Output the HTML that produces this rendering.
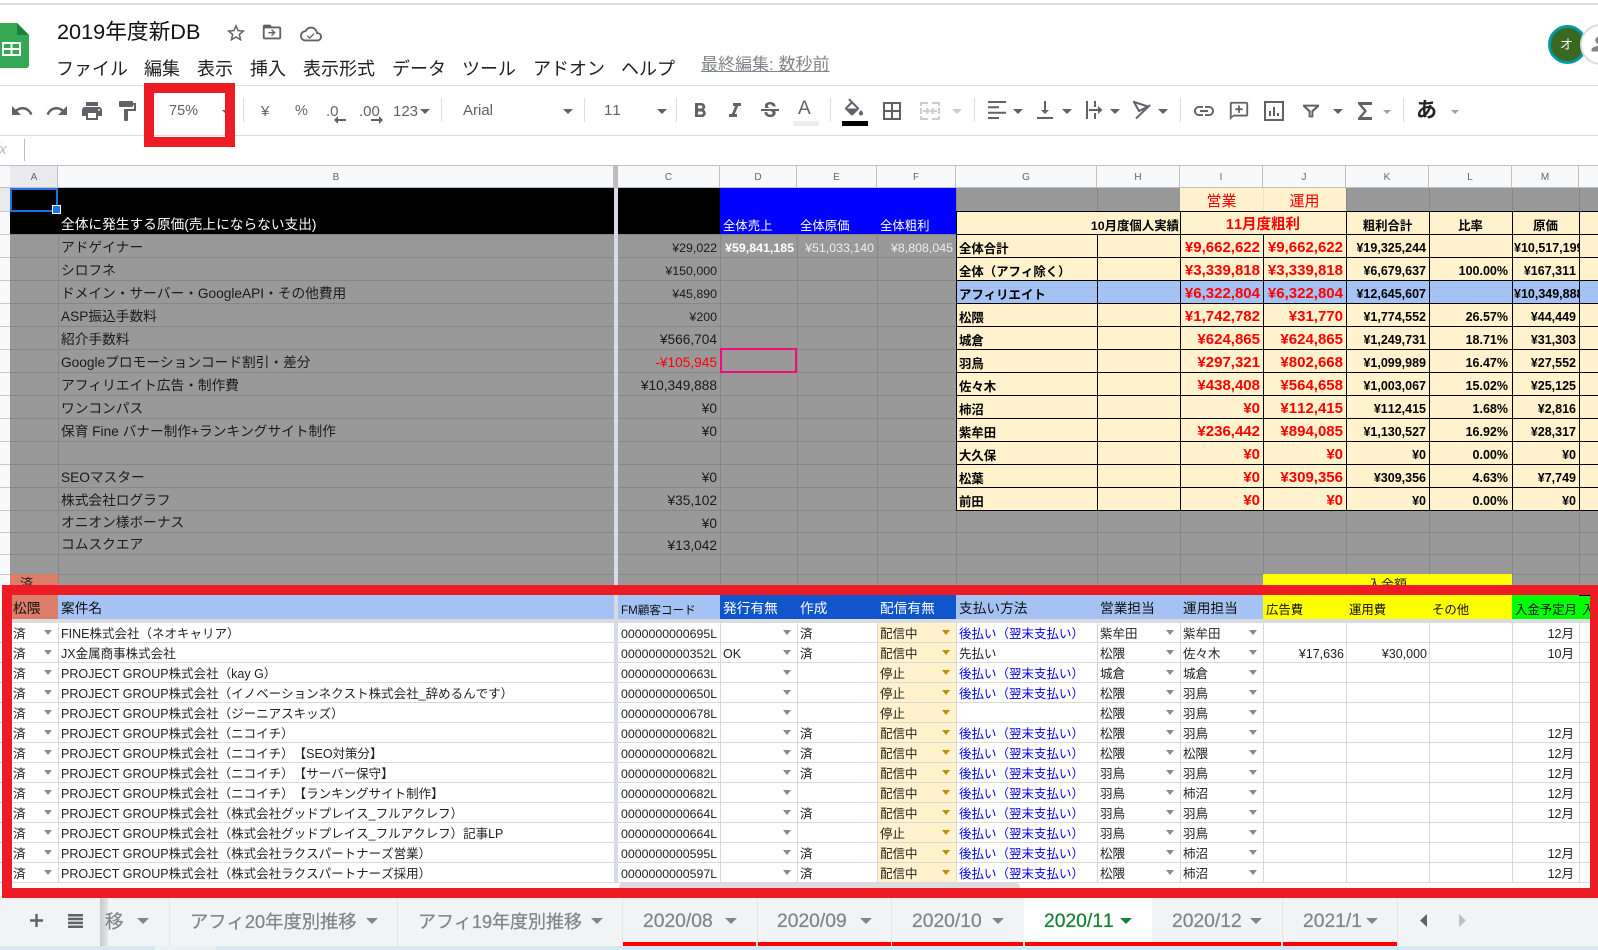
<!DOCTYPE html>
<html lang="ja"><head><meta charset="utf-8"><title>2019年度新DB</title>
<style>
*{box-sizing:border-box}
html,body{margin:0;padding:0;width:1598px;height:950px;overflow:hidden;background:#fff}
body{position:relative;font-family:"Liberation Sans","Noto Sans CJK JP",sans-serif;color:#000;text-spacing-trim:space-all;font-kerning:none}
.a{position:absolute}
svg{position:absolute;fill:#5f6368}
.t{position:absolute;white-space:nowrap;line-height:1}
.m{font-size:18px;top:59.5px;color:#202124}
.tb{color:#5f6368;font-size:15px;top:104px}
.sep{position:absolute;top:98px;height:24px;width:1px;background:#dadce0}
.ar{position:absolute;width:0;height:0;border-left:5px solid transparent;border-right:5px solid transparent;border-top:5px solid #5f6368}
.ch{position:absolute;top:165px;height:23px;line-height:23px;background:#f8f9fa;border-top:1px solid #c0c0c0;border-right:1px solid #c0c0c0;border-bottom:1px solid #c0c0c0;font-size:10px;text-align:center;color:#666}
.v{position:absolute;width:1px}
.r{position:absolute;left:0;width:1598px;height:23px}
.r>*{position:absolute;top:0;height:100%;overflow:hidden;white-space:nowrap;font-style:normal;font-size:13.7px;line-height:27px;padding:0 3px;text-decoration:none;color:#1a1a1a}
.A{left:10px;width:48px}.B{left:58px;width:556px}.C{left:618px;width:102px}.D{left:720px;width:77px}.E{left:797px;width:80px}.F{left:877px;width:79px}
.G{left:956px;width:141px}.H{left:1097px;width:83px}.I{left:1180px;width:83px}.J{left:1263px;width:83px}.K{left:1346px;width:83px}.L{left:1429px;width:83px}.M{left:1512px;width:67px}.N{left:1579px;width:19px}
.n{text-align:right}
.s>*{font-size:12.5px;font-weight:bold;line-height:29px;color:#000;padding:0 3px 0 2px}
.s>.G{font-size:12.4px;padding-left:3px;line-height:30px}
.s>.I,.s>.J{font-size:15px;color:#f00;line-height:27px;padding-right:3px}
.s>.L{padding-right:4px}.s>.M{padding-right:3px}
.q{height:20px}
.q>*{font-size:12.5px;line-height:23px;color:#222;padding:0 2px 0 3px}
.q>.C{padding-left:3px;font-size:12.35px}
.q>.F{background:#fff2cc}
.q>.G{color:#0000ff}
.q>.G.k{color:#222}
.q>.A::after,.q>.D::after,.q>.H::after,.q>.I::after,.q>.F::after{content:"";position:absolute;right:6px;top:7px;width:0;height:0;border-left:4px solid transparent;border-right:4px solid transparent;border-top:5px solid #8a8a8a}
.q>.F::after{border-top-color:#bf9000}
.q>.M{padding-right:5px}
.h{height:24px}
.h>*{font-size:13.7px;line-height:28px;color:#111}
.tl{position:absolute;top:910px;font-size:19.3px;line-height:24px;color:#80868b;white-space:nowrap;-webkit-text-stroke:.25px #80868b}
.rl{position:absolute;top:942px;height:4px;background:#f00}
.ta{position:absolute;top:918px;width:0;height:0;border-left:6px solid transparent;border-right:6px solid transparent;border-top:6px solid #80868b}
.d{position:absolute;top:898px;width:1px;height:48px;background:#e3e5e7}
.g3{top:234px;height:350px;background:#878787}
.g4{top:188px;height:396px;background:#878787}
.bk{background:#000}
.li{top:623px;height:260px;background:#d9d9d9}
</style></head><body>

<div class="a" style="left:0;top:3px;width:1598px;height:2px;background:#dadce0"></div>

<svg style="left:0;top:23px" width="29" height="45" viewBox="0 0 29 45"><path fill="#34a853" d="M0 0H17L29 12V42Q29 45 26 45H0Z"/><path fill="#188038" d="M17 0L29 12H19Q17 12 17 10Z"/><path fill="#fff" d="M2 19H21V33H2ZM4 21V25H10.5V21ZM12.5 21V25H19V21ZM4 27V31H10.5V27ZM12.5 27V31H19V27Z"/></svg>

<div class="t" style="left:57px;top:20px;font-size:21.7px;line-height:24px;color:#111">2019年度新DB</div>
<svg style="left:225px;top:22px" width="22" height="22" viewBox="0 0 24 24"><path d="M22 9.24l-7.19-.62L12 2 9.19 8.63 2 9.24l5.46 4.73L5.82 21 12 17.27 18.18 21l-1.63-7.03L22 9.24zM12 15.4l-3.76 2.27 1-4.28-3.32-2.88 4.38-.38L12 6.1l1.71 4.04 4.38.38-3.32 2.88 1 4.28L12 15.4z"/></svg>
<svg style="left:261px;top:21px" width="22" height="22" viewBox="0 0 24 24"><path d="M20 6h-8l-2-2H4c-1.1 0-2 .9-2 2v12c0 1.1.9 2 2 2h16c1.1 0 2-.9 2-2V8c0-1.1-.9-2-2-2zm0 12H4V8h16v10z"/><path d="M12 9l-1 1 2 2H8v1.5h5l-2 2 1 1 4-4z"/></svg>
<svg style="left:300px;top:23px" width="22" height="22" viewBox="0 0 24 24"><path d="M19.35 10.04C18.67 6.59 15.64 4 12 4 9.11 4 6.6 5.64 5.35 8.04 2.34 8.36 0 10.91 0 14c0 3.31 2.69 6 6 6h13c2.76 0 5-2.24 5-5 0-2.64-2.05-4.78-4.65-4.96zM19 18H6c-2.21 0-4-1.79-4-4s1.79-4 4-4h.71C7.37 7.69 9.48 6 12 6c3.04 0 5.5 2.46 5.5 5.5v.5H19c1.66 0 3 1.34 3 3s-1.34 3-3 3z"/><path d="M10.5 15.5l-2-2-1 1 3 3 5.5-5.5-1-1z"/></svg>

<div class="t m" style="left:56px">ファイル</div>
<div class="t m" style="left:144px">編集</div>
<div class="t m" style="left:197px">表示</div>
<div class="t m" style="left:250px">挿入</div>
<div class="t m" style="left:303px">表示形式</div>
<div class="t m" style="left:392px">データ</div>
<div class="t m" style="left:462px">ツール</div>
<div class="t m" style="left:533px">アドオン</div>
<div class="t m" style="left:621px">ヘルプ</div>
<div class="t" style="left:701px;top:56px;font-size:17px;color:#80868b;text-decoration:underline">最終編集: 数秒前</div>

<div class="a" style="left:1548px;top:25px;width:39px;height:39px;border-radius:50%;background:#38691e;border:3px solid #0097a7;color:#fff;font-size:13px;line-height:33px;text-align:center;padding-right:2px">オ</div>
<div class="a" style="left:1580px;top:24px;width:41px;height:41px;border-radius:50%;background:#fff;border:2px solid #dadce0"></div>
<svg style="left:1590px;top:35px" width="18" height="18" viewBox="0 0 24 24"><path fill="#80868b" d="M12 12a5 5 0 1 0 0-10 5 5 0 0 0 0 10zm0 2.5c-3.3 0-10 1.7-10 5V22h20v-2.5c0-3.3-6.700-5-10-5z"/></svg>

<div class="a" style="left:0;top:85px;width:1598px;height:1px;background:#dadce0"></div>
<div class="a" style="left:0;top:135px;width:1598px;height:1px;background:#dadce0"></div>
<svg style="left:10px;top:99px" width="24" height="24" viewBox="0 0 24 24"><path d="M12.500 8c-2.650 0-5.050.99-6.900 2.600L2 7v9h9l-3.620-3.620c1.390-1.160 3.160-1.880 5.120-1.880 3.540 0 6.550 2.310 7.600 5.500l2.370-.78C21.080 11.030 17.150 8 12.500 8z"/></svg>
<svg style="left:45px;top:99px" width="24" height="24" viewBox="0 0 24 24"><path d="M18.400 10.600C16.550 8.990 14.150 8 11.500 8c-4.650 0-8.580 3.030-9.960 7.220L3.900 16c1.050-3.190 4.050-5.500 7.600-5.500 1.950 0 3.730.72 5.120 1.880L13 16h9V7l-3.600 3.600z"/></svg>
<svg style="left:80px;top:99px" width="24" height="24" viewBox="0 0 24 24"><path d="M19 8H5c-1.660 0-3 1.340-3 3v6h4v4h12v-4h4v-6c0-1.660-1.340-3-3-3zm-3 11H8v-5h8v5zm3-7c-.55 0-1-.45-1-1s.45-1 1-1 1 .45 1 1-.45 1-1 1zm-1-9H6v4h12V3z"/></svg>
<svg style="left:115px;top:99px" width="24" height="24" viewBox="0 0 24 24"><path d="M18 4V3c0-.55-.45-1-1-1H5c-.55 0-1 .45-1 1v4c0 .55.45 1 1 1h12c.55 0 1-.45 1-1V6h1v4H9v11c0 .55.45 1 1 1h2c.55 0 1-.45 1-1v-9h8V4h-3z"/></svg>
<div class="t tb" style="left:169px;font-size:14.500px">75%</div>
<div class="ar" style="left:222px;top:110px;border-left-width:4px;border-right-width:4px;border-top-width:4px"></div>
<div class="sep" style="left:243px"></div>
<div class="t tb" style="left:261px">¥</div>
<div class="t tb" style="left:295px;font-size:14.500px">%</div>
<div class="t tb" style="left:326px">.0</div>
<svg style="left:334px;top:116px" width="12" height="8" viewBox="0 0 12 8"><path d="M4 0L0 4l4 4V5h8V3H4z"/></svg>
<div class="t tb" style="left:359px">.00</div>
<svg style="left:371px;top:116px" width="12" height="8" viewBox="0 0 12 8"><path d="M8 0l4 4-4 4V5H0V3h8z"/></svg>
<div class="t tb" style="left:393px">123</div>
<div class="ar" style="left:420px;top:109px"></div>
<div class="sep" style="left:441px"></div>
<div class="t tb" style="left:463px;top:103px">Arial</div>
<div class="ar" style="left:563px;top:109px"></div>
<div class="sep" style="left:584px"></div>
<div class="t tb" style="left:604px;top:103px">11</div>
<div class="ar" style="left:657px;top:109px"></div>
<div class="sep" style="left:676px"></div>
<svg style="left:688px;top:99px" width="24" height="24" viewBox="0 0 24 24"><path d="M15.600 10.790c.97-.67 1.650-1.770 1.650-2.790 0-2.260-1.750-4-4-4H7v14h7.040c2.090 0 3.710-1.700 3.710-3.790 0-1.520-.86-2.820-2.150-3.420zM10 6.500h3c.83 0 1.500.67 1.500 1.500s-.67 1.500-1.500 1.500h-3v-3zm3.500 9H10v-3h3.500c.83 0 1.500.67 1.500 1.500s-.67 1.500-1.500 1.500z"/></svg>
<svg style="left:723px;top:99px" width="24" height="24" viewBox="0 0 24 24"><path d="M10 4v3h2.210l-3.420 8H6v3h8v-3h-2.210l3.420-8H18V4z"/></svg>
<svg style="left:758px;top:99px" width="24" height="24" viewBox="0 0 24 24"><path d="M6.850 7.080C6.850 4.370 9.450 3 12.240 3c1.640 0 3 .49 3.900 1.280.77.65 1.460 1.730 1.460 3.240h-3.010c0-.31-.05-.59-.15-.85-.29-.86-1.200-1.280-2.250-1.280-1.860 0-2.340 1.020-2.340 1.700 0 .48.25.88.74 1.210.38.25.77.48 1.410.7H7.390c-.21-.34-.54-.89-.54-1.920zM21 12v-2H3v2h9.620c1.150.45 1.960.75 1.960 1.970 0 1-.81 1.670-2.280 1.670-1.540 0-2.930-.54-2.930-2.510H6.400c0 .55.08 1.130.24 1.580.81 2.290 3.290 3.300 5.670 3.300 2.270 0 5.300-.89 5.300-4.050 0-.3-.01-1.160-.48-1.940H21V12z"/></svg>
<div class="t" style="left:798px;top:99px;font-size:19px;color:#5f6368">A</div>
<div class="a" style="left:793px;top:121px;width:26px;height:5px;background:#eee"></div>
<div class="sep" style="left:830px"></div>
<svg style="left:842px;top:98px" width="22" height="20" viewBox="0 0 22 19"><path d="M16.560 8.940L7.620 0 6.210 1.410l2.380 2.380-5.150 5.150c-.59.59-.59 1.540 0 2.120l5.500 5.500c.29.29.68.44 1.060.44s.77-.15 1.060-.44l5.500-5.500c.59-.58.59-1.530 0-2.120zM5.210 10L10 5.210 14.790 10H5.210zM19 11.500s-2 2.170-2 3.500c0 1.100.9 2 2 2s2-.9 2-2c0-1.330-2-3.500-2-3.500z"/></svg>
<div class="a" style="left:842px;top:121px;width:26px;height:5px;background:#000"></div>
<svg style="left:883px;top:102px" width="18" height="18" viewBox="0 0 18 18"><path d="M0 0H18V18H0ZM2 2V8H8V2ZM10 2V8H16V2ZM2 10V16H8V10ZM10 10V16H16V10Z"/></svg>
<svg style="left:920px;top:102px" width="20" height="18" viewBox="0 0 20 18"><path fill="#ccc" d="M0 0H8V2H2V4H0ZM12 0H20V4H18V2H12ZM0 14H2V16H8V18H0ZM18 14H20V18H12V16H18ZM0 6H2V12H0ZM18 6H20V12H18ZM3 8H7L5.500 6H7.500L10 9 7.500 12H5.500L7 10H3ZM17 8H13L14.500 6H12.500L10 9 12.500 12H14.500L13 10H17Z"/></svg>
<div class="ar" style="left:952px;top:109px;border-top-color:#ccc"></div>
<div class="sep" style="left:974px"></div>
<svg style="left:988px;top:101px" width="18" height="18" viewBox="0 0 18 18"><path d="M0 0H18V2H0ZM0 5.300H11V7.300H0ZM0 10.700H18V12.700H0ZM0 16H11V18H0Z"/></svg>
<div class="ar" style="left:1013px;top:109px"></div>
<svg style="left:1037px;top:101px" width="16" height="18" viewBox="0 0 16 18"><path d="M7 0H9V9H12L8 13 4 9H7ZM0 16H16V18H0Z"/></svg>
<div class="ar" style="left:1062px;top:109px"></div>
<svg style="left:1086px;top:101px" width="17" height="18" viewBox="0 0 17 18"><path d="M0 0H2V18H0ZM8 0H10V6H8ZM8 12H10V18H8ZM3 8H12V5L16.500 9 12 13V10H3Z"/></svg>
<div class="ar" style="left:1110px;top:109px"></div>
<svg style="left:1133px;top:100px" width="20" height="20" viewBox="0 0 20 20"><path fill="none" stroke="#5f6368" stroke-width="2" d="M1 2L15 6.500 6 11ZM3 18.500L17 5"/></svg>
<div class="ar" style="left:1158px;top:109px"></div>
<div class="sep" style="left:1180px"></div>
<svg style="left:1192px;top:99px" width="24" height="24" viewBox="0 0 24 24"><path d="M3.900 12c0-1.710 1.390-3.100 3.100-3.100h4V7H7c-2.760 0-5 2.240-5 5s2.240 5 5 5h4v-1.900H7c-1.710 0-3.100-1.390-3.100-3.100zM8 13h8v-2H8v2zm9-6h-4v1.900h4c1.710 0 3.100 1.390 3.100 3.100s-1.390 3.100-3.100 3.100h-4V17h4c2.760 0 5-2.240 5-5s-2.240-5-5-5z"/></svg>
<svg style="left:1228px;top:100px" width="22" height="22" viewBox="0 0 24 24"><path d="M20 2H4c-1.100 0-2 .9-2 2v18l4-4h14c1.100 0 2-.9 2-2V4c0-1.100-.9-2-2-2zm0 14H6l-2 2V4h16v12z"/><path d="M11 6h2v3h3v2h-3v3h-2v-3H8V9h3z"/></svg>
<svg style="left:1264px;top:101px" width="20" height="20" viewBox="0 0 20 20"><path d="M0 0H20V20H0ZM2 2V18H18V2ZM5 10H7V15H5ZM9 6H11V15H9ZM13 12H15V15H13Z"/></svg>
<svg style="left:1303px;top:103px" width="16" height="16" viewBox="0 0 20 16"><path d="M0 0H20V2.500L13 9V16H7V9L0 2.500ZM4 2.500L9.500 7.500V14H10.500V7.500L16 2.500Z"/></svg>
<div class="ar" style="left:1333px;top:109px"></div>
<svg style="left:1358px;top:102px" width="14" height="18" viewBox="0 0 14 18"><path d="M0 0H14V3H4L9 9 4 15H14V18H0V16L6 9 0 2Z"/></svg>
<div class="ar" style="left:1383px;top:110px;border-left-width:4px;border-right-width:4px;border-top:4px solid #9aa0a6"></div>
<div class="sep" style="left:1403px"></div>
<div class="t" style="left:1416px;top:100px;font-size:21px;font-weight:bold;color:#222">あ</div>
<div class="ar" style="left:1451px;top:110px;border-left-width:4px;border-right-width:4px;border-top:4px solid #9aa0a6"></div>

<div class="t" style="left:-5px;top:142px;font-size:15px;color:#bbb;font-style:italic">fx</div>
<div class="a" style="left:24px;top:139px;width:1px;height:22px;background:#bdbdbd"></div>

<div class="a" style="left:0;top:165px;width:1598px;height:23px;background:#f8f9fa;border-top:1px solid #c0c0c0;border-bottom:1px solid #c0c0c0"></div>
<div class="ch" style="left:10px;width:48px;background:#e8eaed;padding-left:1px">A</div>
<div class="ch" style="left:58px;width:556px;padding-left:1px">B</div>
<div class="a" style="left:614px;top:165px;width:4px;height:23px;background:#bdbdbd"></div>
<div class="ch" style="left:618px;width:102px">C</div>
<div class="ch" style="left:720px;width:77px">D</div>
<div class="ch" style="left:797px;width:80px">E</div>
<div class="ch" style="left:877px;width:79px">F</div>
<div class="ch" style="left:956px;width:141px">G</div>
<div class="ch" style="left:1097px;width:83px">H</div>
<div class="ch" style="left:1180px;width:83px">I</div>
<div class="ch" style="left:1263px;width:83px">J</div>
<div class="ch" style="left:1346px;width:83px">K</div>
<div class="ch" style="left:1429px;width:83px">L</div>
<div class="ch" style="left:1512px;width:67px">M</div>
<div class="ch" style="left:1579px;width:19px;border-right:0"></div>

<div class="a" style="left:0;top:188px;width:10px;height:710px;background:#f8f9fa"></div>
<div class="a" style="left:0;top:188px;width:10px;height:23px;background:#e8eaed"></div>
<div class="a" style="left:0;top:211px;width:10px;height:300px;background:repeating-linear-gradient(to bottom,#c8c8c8 0 1px,transparent 1px 23px)"></div>
<div class="a" style="left:0;top:532px;width:10px;height:1px;background:#c8c8c8"></div>
<div class="a" style="left:0;top:554px;width:10px;height:1px;background:#c8c8c8"></div>
<div class="a" style="left:0;top:574px;width:10px;height:1px;background:#c8c8c8"></div>
<div class="a" style="left:0;top:642px;width:10px;height:241px;background:repeating-linear-gradient(to bottom,#c8c8c8 0 1px,transparent 1px 20px)"></div>

<div class="a" style="left:10px;top:188px;width:1588px;height:400px;background:#999"></div>
<div class="a" style="left:10px;top:234px;width:1588px;height:277px;background:repeating-linear-gradient(to bottom,#878787 0 1px,transparent 1px 23px)"></div>
<div class="a" style="left:10px;top:532px;width:1588px;height:1px;background:#878787"></div>
<div class="a" style="left:10px;top:554px;width:1588px;height:1px;background:#878787"></div>
<div class="a" style="left:10px;top:574px;width:1588px;height:1px;background:#878787"></div>
<div class="a" style="left:10px;top:211px;width:1588px;height:1px;background:#878787"></div>
<div class="v g3" style="left:58px"></div>
<div class="v g3" style="left:720px"></div>
<div class="v g3" style="left:797px"></div>
<div class="v g3" style="left:877px"></div>
<div class="v g4" style="left:956px"></div>
<div class="v g4" style="left:1097px"></div>
<div class="v g4" style="left:1180px"></div>
<div class="v g4" style="left:1263px"></div>
<div class="v g4" style="left:1346px"></div>
<div class="v g4" style="left:1429px"></div>
<div class="v g4" style="left:1512px"></div>
<div class="v g4" style="left:1579px"></div>

<div class="a" style="left:10px;top:188px;width:710px;height:46px;background:#000"></div>
<div class="a" style="left:720px;top:188px;width:236px;height:46px;background:#00f"></div>
<div class="t" style="left:61px;top:214px;font-size:13.7px;line-height:22px;color:#fff">全体に発生する原価(売上にならない支出)</div>
<div class="t" style="left:723px;top:216px;font-size:12.400px;line-height:20px;color:#fff">全体売上</div>
<div class="t" style="left:800px;top:216px;font-size:12.400px;line-height:20px;color:#fff">全体原価</div>
<div class="t" style="left:880px;top:216px;font-size:12.400px;line-height:20px;color:#fff">全体粗利</div>

<div class="a" style="left:1180px;top:188px;width:166px;height:23px;background:#fff2cc"></div>
<div class="a" style="left:1263px;top:188px;width:1px;height:23px;background:#f0e4c0"></div>
<div class="t" style="left:1180px;top:188px;width:83px;text-align:center;font-size:15px;line-height:28px;color:#f00">営業</div>
<div class="t" style="left:1263px;top:188px;width:83px;text-align:center;font-size:15px;line-height:28px;color:#f00">運用</div>
<div class="a" style="left:956px;top:211px;width:642px;height:300px;background:#fff2cc"></div>
<div class="a" style="left:956px;top:280px;width:642px;height:23px;background:#a4c2f4"></div>
<div class="a" style="left:956px;top:211px;width:642px;height:300px;background:repeating-linear-gradient(to bottom,#000 0 1px,transparent 1px 23px)"></div>
<div class="v bk" style="left:956px;top:211px;height:300px"></div>
<div class="v bk" style="left:1097px;top:234px;height:277px"></div>
<div class="v bk" style="left:1180px;top:211px;height:300px"></div>
<div class="v bk" style="left:1263px;top:234px;height:277px"></div>
<div class="v bk" style="left:1346px;top:211px;height:300px"></div>
<div class="v bk" style="left:1429px;top:211px;height:300px"></div>
<div class="v bk" style="left:1512px;top:211px;height:300px"></div>
<div class="v bk" style="left:1579px;top:211px;height:300px"></div>
<div class="t" style="left:1059px;top:212px;width:120px;height:22px;overflow:hidden;direction:rtl;font-size:12.400px;line-height:29px;font-weight:bold;text-align:right"><span style="direction:ltr;unicode-bidi:bidi-override">10月度個人実績</span></div>
<div class="t" style="left:1180px;top:211px;width:166px;text-align:center;font-size:14.500px;line-height:28px;font-weight:bold;color:#f00">11月度粗利</div>
<div class="t" style="left:1346px;top:211px;width:83px;text-align:center;font-size:12.400px;line-height:30px;font-weight:bold">粗利合計</div>
<div class="t" style="left:1429px;top:211px;width:83px;text-align:center;font-size:12.400px;line-height:30px;font-weight:bold">比率</div>
<div class="t" style="left:1512px;top:211px;width:67px;text-align:center;font-size:12.400px;line-height:30px;font-weight:bold">原価</div>

<div class="r" style="top:234px"><a class="B">アドゲイナー</a><a class="C n" style="line-height:29px;font-size:12.400px">¥29,022</a><a class="D n" style="color:#fff;font-weight:bold;font-size:12.400px;line-height:29px">¥59,841,185</a><a class="E n" style="color:#eee;font-size:12.400px;line-height:29px">¥51,033,140</a><a class="F n" style="color:#eee;font-size:12.400px;line-height:29px">¥8,808,045</a></div>
<div class="r" style="top:257px"><a class="B">シロフネ</a><a class="C n" style="line-height:29px;font-size:12.400px">¥150,000</a></div>
<div class="r" style="top:280px"><a class="B">ドメイン・サーバー・GoogleAPI・その他費用</a><a class="C n" style="line-height:29px;font-size:12.400px">¥45,890</a></div>
<div class="r" style="top:303px"><a class="B">ASP振込手数料</a><a class="C n" style="line-height:29px;font-size:12.400px">¥200</a></div>
<div class="r" style="top:326px"><a class="B">紹介手数料</a><a class="C n" style="line-height:27px">¥566,704</a></div>
<div class="r" style="top:349px"><a class="B">Googleプロモーションコード割引・差分</a><a class="C n" style="line-height:27px;color:#f00">-¥105,945</a></div>
<div class="r" style="top:372px"><a class="B">アフィリエイト広告・制作費</a><a class="C n" style="line-height:27px">¥10,349,888</a></div>
<div class="r" style="top:395px"><a class="B">ワンコンパス</a><a class="C n" style="line-height:27px">¥0</a></div>
<div class="r" style="top:418px"><a class="B">保育 Fine バナー制作+ランキングサイト制作</a><a class="C n" style="line-height:27px">¥0</a></div>
<div class="r" style="top:464px"><a class="B">SEOマスター</a><a class="C n" style="line-height:27px">¥0</a></div>
<div class="r" style="top:487px"><a class="B">株式会社ログラフ</a><a class="C n" style="line-height:27px">¥35,102</a></div>
<div class="r" style="top:510px;height:22px"><a class="B" style="line-height:26px">オニオン様ボーナス</a><a class="C n" style="line-height:27px">¥0</a></div>
<div class="r" style="top:532px;height:22px"><a class="B" style="line-height:26px">コムスクエア</a><a class="C n" style="line-height:27px">¥13,042</a></div>

<div class="a" style="left:720px;top:348px;width:77px;height:25px;border:2px solid #f50a80"></div>

<div class="a" style="left:10px;top:188px;width:48px;height:24px;border:2px solid #1a73e8"></div>
<div class="a" style="left:52px;top:205px;width:9px;height:9px;background:#1a73e8;border:1px solid #fff"></div>

<div class="r s" style="top:234px"><a class="G">全体合計</a><a class="I n">¥9,662,622</a><a class="J n">¥9,662,622</a><a class="K n">¥19,325,244</a><a class="M">¥10,517,199</a></div>
<div class="r s" style="top:257px"><a class="G">全体（アフィ除く）</a><a class="I n">¥3,339,818</a><a class="J n">¥3,339,818</a><a class="K n">¥6,679,637</a><a class="L n">100.00%</a><a class="M n">¥167,311</a></div>
<div class="r s" style="top:280px"><a class="G">アフィリエイト</a><a class="I n">¥6,322,804</a><a class="J n">¥6,322,804</a><a class="K n">¥12,645,607</a><a class="M">¥10,349,888</a></div>
<div class="r s" style="top:303px"><a class="G">松隈</a><a class="I n">¥1,742,782</a><a class="J n">¥31,770</a><a class="K n">¥1,774,552</a><a class="L n">26.57%</a><a class="M n">¥44,449</a></div>
<div class="r s" style="top:326px"><a class="G">城倉</a><a class="I n">¥624,865</a><a class="J n">¥624,865</a><a class="K n">¥1,249,731</a><a class="L n">18.71%</a><a class="M n">¥31,303</a></div>
<div class="r s" style="top:349px"><a class="G">羽鳥</a><a class="I n">¥297,321</a><a class="J n">¥802,668</a><a class="K n">¥1,099,989</a><a class="L n">16.47%</a><a class="M n">¥27,552</a></div>
<div class="r s" style="top:372px"><a class="G">佐々木</a><a class="I n">¥438,408</a><a class="J n">¥564,658</a><a class="K n">¥1,003,067</a><a class="L n">15.02%</a><a class="M n">¥25,125</a></div>
<div class="r s" style="top:395px"><a class="G">柿沼</a><a class="I n">¥0</a><a class="J n">¥112,415</a><a class="K n">¥112,415</a><a class="L n">1.68%</a><a class="M n">¥2,816</a></div>
<div class="r s" style="top:418px"><a class="G">紫牟田</a><a class="I n">¥236,442</a><a class="J n">¥894,085</a><a class="K n">¥1,130,527</a><a class="L n">16.92%</a><a class="M n">¥28,317</a></div>
<div class="r s" style="top:441px"><a class="G">大久保</a><a class="I n">¥0</a><a class="J n">¥0</a><a class="K n">¥0</a><a class="L n">0.00%</a><a class="M n">¥0</a></div>
<div class="r s" style="top:464px"><a class="G">松葉</a><a class="I n">¥0</a><a class="J n">¥309,356</a><a class="K n">¥309,356</a><a class="L n">4.63%</a><a class="M n">¥7,749</a></div>
<div class="r s" style="top:487px"><a class="G">前田</a><a class="I n">¥0</a><a class="J n">¥0</a><a class="K n">¥0</a><a class="L n">0.00%</a><a class="M n">¥0</a></div>

<div class="a" style="left:10px;top:574px;width:48px;height:14px;background:#dd7e6b"></div>
<div class="t" style="left:20px;top:576px;font-size:13px;line-height:16px;height:12px;overflow:hidden;color:#222">済</div>
<div class="a" style="left:1263px;top:574px;width:249px;height:14px;background:#ff0"></div>
<div class="t" style="left:1263px;top:578px;width:249px;text-align:center;font-size:13px;height:8px;overflow:hidden;color:#222">入金額</div>

<div class="a" style="left:614px;top:188px;width:4px;height:400px;background:#d8dbe3"></div>

<div class="a" style="left:0;top:595px;width:1598px;height:24px;background:#fff"></div>
<div class="a" style="left:10px;top:595px;width:48px;height:24px;background:#dd7e6b"></div>
<div class="a" style="left:58px;top:595px;width:662px;height:24px;background:#a4c2f4"></div>
<div class="a" style="left:720px;top:595px;width:236px;height:24px;background:#1155cc"></div>
<div class="a" style="left:956px;top:595px;width:307px;height:24px;background:#a4c2f4"></div>
<div class="a" style="left:1263px;top:595px;width:249px;height:24px;background:#ff0"></div>
<div class="a" style="left:1512px;top:595px;width:86px;height:24px;background:#0f0"></div>
<div class="a" style="left:1579px;top:595px;width:19px;height:1px;background:#000"></div>
<div class="a" style="left:614px;top:595px;width:4px;height:24px;background:#d8dbe3"></div>
<div class="a" style="left:10px;top:619px;width:1588px;height:4px;background:#dadce0"></div>
<div class="r h" style="top:595px"><a class="A" style="padding-left:3px">松隈</a><a class="B">案件名</a><a class="C" style="font-size:11.600px;line-height:31px">FM顧客コード</a><a class="D" style="color:#fff">発行有無</a><a class="E" style="color:#fff">作成</a><a class="F" style="color:#fff">配信有無</a><a class="G">支払い方法</a><a class="H">営業担当</a><a class="I">運用担当</a><a class="J" style="font-size:12.400px;line-height:31px">広告費</a><a class="K" style="font-size:12.400px;line-height:31px">運用費</a><a class="L" style="font-size:12.400px;line-height:31px">その他</a><a class="M" style="font-size:12.400px;line-height:31px">入金予定月</a><a class="N" style="font-size:12.400px;line-height:31px">入金</a></div>

<div class="a" style="left:10px;top:623px;width:1588px;height:275px;background:#fff"></div>
<div class="a" style="left:877px;top:623px;width:79px;height:260px;background:#fff2cc"></div>
<div class="a" style="left:614px;top:623px;width:4px;height:260px;background:#d8dbe3"></div>

<div class="r q" style="top:623px"><a class="A">済</a><a class="B">FINE株式会社（ネオキャリア）</a><a class="C">0000000000695L</a><a class="D"></a><a class="E">済</a><a class="F">配信中</a><a class="G">後払い（翌末支払い）</a><a class="H">紫牟田</a><a class="I">紫牟田</a><a class="M n">12月</a></div>
<div class="r q" style="top:643px"><a class="A">済</a><a class="B">JX金属商事株式会社</a><a class="C">0000000000352L</a><a class="D">OK</a><a class="E">済</a><a class="F">配信中</a><a class="G k">先払い</a><a class="H">松隈</a><a class="I">佐々木</a><a class="J n">¥17,636</a><a class="K n">¥30,000</a><a class="M n">10月</a></div>
<div class="r q" style="top:663px"><a class="A">済</a><a class="B">PROJECT GROUP株式会社（kay G）</a><a class="C">0000000000663L</a><a class="D"></a><a class="F">停止</a><a class="G">後払い（翌末支払い）</a><a class="H">城倉</a><a class="I">城倉</a></div>
<div class="r q" style="top:683px"><a class="A">済</a><a class="B">PROJECT GROUP株式会社（イノベーションネクスト株式会社_辞めるんです）</a><a class="C">0000000000650L</a><a class="D"></a><a class="F">停止</a><a class="G">後払い（翌末支払い）</a><a class="H">松隈</a><a class="I">羽鳥</a></div>
<div class="r q" style="top:703px"><a class="A">済</a><a class="B">PROJECT GROUP株式会社（ジーニアスキッズ）</a><a class="C">0000000000678L</a><a class="D"></a><a class="F">停止</a><a class="G"></a><a class="H">松隈</a><a class="I">羽鳥</a></div>
<div class="r q" style="top:723px"><a class="A">済</a><a class="B">PROJECT GROUP株式会社（ニコイチ）</a><a class="C">0000000000682L</a><a class="D"></a><a class="E">済</a><a class="F">配信中</a><a class="G">後払い（翌末支払い）</a><a class="H">松隈</a><a class="I">羽鳥</a><a class="M n">12月</a></div>
<div class="r q" style="top:743px"><a class="A">済</a><a class="B">PROJECT GROUP株式会社（ニコイチ）【SEO対策分】</a><a class="C">0000000000682L</a><a class="D"></a><a class="E">済</a><a class="F">配信中</a><a class="G">後払い（翌末支払い）</a><a class="H">松隈</a><a class="I">松隈</a><a class="M n">12月</a></div>
<div class="r q" style="top:763px"><a class="A">済</a><a class="B">PROJECT GROUP株式会社（ニコイチ）【サーバー保守】</a><a class="C">0000000000682L</a><a class="D"></a><a class="E">済</a><a class="F">配信中</a><a class="G">後払い（翌末支払い）</a><a class="H">羽鳥</a><a class="I">羽鳥</a><a class="M n">12月</a></div>
<div class="r q" style="top:783px"><a class="A">済</a><a class="B">PROJECT GROUP株式会社（ニコイチ）【ランキングサイト制作】</a><a class="C">0000000000682L</a><a class="D"></a><a class="F">配信中</a><a class="G">後払い（翌末支払い）</a><a class="H">羽鳥</a><a class="I">柿沼</a><a class="M n">12月</a></div>
<div class="r q" style="top:803px"><a class="A">済</a><a class="B">PROJECT GROUP株式会社（株式会社グッドプレイス_フルアクレフ）</a><a class="C">0000000000664L</a><a class="D"></a><a class="E">済</a><a class="F">配信中</a><a class="G">後払い（翌末支払い）</a><a class="H">羽鳥</a><a class="I">羽鳥</a><a class="M n">12月</a></div>
<div class="r q" style="top:823px"><a class="A">済</a><a class="B">PROJECT GROUP株式会社（株式会社グッドプレイス_フルアクレフ）記事LP</a><a class="C">0000000000664L</a><a class="D"></a><a class="F">停止</a><a class="G">後払い（翌末支払い）</a><a class="H">羽鳥</a><a class="I">羽鳥</a></div>
<div class="r q" style="top:843px"><a class="A">済</a><a class="B">PROJECT GROUP株式会社（株式会社ラクスパートナーズ営業）</a><a class="C">0000000000595L</a><a class="D"></a><a class="E">済</a><a class="F">配信中</a><a class="G">後払い（翌末支払い）</a><a class="H">松隈</a><a class="I">柿沼</a><a class="M n">12月</a></div>
<div class="r q" style="top:863px"><a class="A">済</a><a class="B">PROJECT GROUP株式会社（株式会社ラクスパートナーズ採用）</a><a class="C">0000000000597L</a><a class="D"></a><a class="E">済</a><a class="F">配信中</a><a class="G">後払い（翌末支払い）</a><a class="H">松隈</a><a class="I">柿沼</a><a class="M n">12月</a></div>

<div class="a" style="left:10px;top:642px;width:1588px;height:241px;background:repeating-linear-gradient(to bottom,#d9d9d9 0 1px,transparent 1px 20px)"></div>
<div class="v li" style="left:58px"></div>
<div class="v li" style="left:720px"></div>
<div class="v li" style="left:797px"></div>
<div class="v li" style="left:877px"></div>
<div class="v li" style="left:956px"></div>
<div class="v li" style="left:1097px"></div>
<div class="v li" style="left:1180px"></div>
<div class="v li" style="left:1263px"></div>
<div class="v li" style="left:1346px"></div>
<div class="v li" style="left:1429px"></div>
<div class="v li" style="left:1512px"></div>
<div class="v li" style="left:1579px"></div>
<div class="a" style="left:619px;top:883px;width:401px;height:6px;background:#dadce0;border-radius:4px 4px 0 0"></div>

<div class="a" style="left:0;top:898px;width:1598px;height:48px;background:#f1f3f4"></div>
<div class="a" style="left:0;top:946px;width:1598px;height:4px;background:#d3e8f0"></div>
<div class="a" style="left:155px;top:946px;width:61px;height:4px;background:#e8f3f7"></div>
<svg style="left:30px;top:914px" width="13" height="13" viewBox="0 0 13 13"><path d="M5.300 0H7.700V5.300H13V7.700H7.700V13H5.300V7.700H0V5.300H5.300Z"/></svg>
<svg style="left:68px;top:914px" width="15" height="14" viewBox="0 0 15 14"><path d="M0 0H15V2.500H0ZM0 3.800H15V6.300H0ZM0 7.600H15V10.100H0ZM0 11.500H15V14H0Z"/></svg>
<div class="a" style="left:100px;top:898px;width:8px;height:48px;background:linear-gradient(to right,#c8c9ca,#e4e6e7)"></div>
<div class="tl" style="left:105px;font-size:18.500px">移</div><div class="ta" style="left:137px"></div>
<div class="d" style="left:169px"></div>
<div class="tl" style="left:190px;font-size:18.300px">アフィ20年度別推移</div><div class="ta" style="left:366px"></div>
<div class="d" style="left:397px"></div>
<div class="tl" style="left:418px;font-size:18px">アフィ19年度別推移</div><div class="ta" style="left:591px"></div>
<div class="d" style="left:622px"></div>
<div class="tl" style="left:643px">2020/08</div><div class="ta" style="left:725px"></div>
<div class="d" style="left:757px"></div>
<div class="tl" style="left:777px">2020/09</div><div class="ta" style="left:860px"></div>
<div class="d" style="left:891px"></div>
<div class="tl" style="left:912px">2020/10</div><div class="ta" style="left:992px"></div>
<div class="a" style="left:1024px;top:898px;width:128px;height:48px;background:#fff"></div>
<div class="tl" style="left:1044px;color:#188038;-webkit-text-stroke:.25px #188038">2020/11</div><div class="ta" style="left:1120px;border-top-color:#188038"></div>
<div class="tl" style="left:1172px">2020/12</div><div class="ta" style="left:1250px"></div>
<div class="d" style="left:1282px"></div>
<div class="tl" style="left:1303px">2021/1</div><div class="ta" style="left:1366px"></div>
<div class="d" style="left:1397px"></div>
<div class="rl" style="left:623px;width:133px"></div>
<div class="rl" style="left:758px;width:133px"></div>
<div class="rl" style="left:892px;width:131px"></div>
<div class="rl" style="left:1025px;width:127px"></div>
<div class="rl" style="left:1152px;width:129px"></div>
<div class="rl" style="left:1283px;width:114px"></div>
<svg style="left:1420px;top:914px" width="7" height="13" viewBox="0 0 7 13"><path fill="#5f6368" d="M7 0V13L0 6.500Z"/></svg>
<svg style="left:1459px;top:914px" width="7" height="13" viewBox="0 0 7 13"><path fill="#bdc1c6" d="M0 0V13L7 6.500Z"/></svg>

<div class="a" style="left:2px;top:585px;width:1596px;height:313px;border:solid #ed1c24;border-width:10px 8px 10px 10px"></div>
<div class="a" style="left:144px;top:83px;width:91px;height:64px;border:10px solid #ed1c24"></div>

</body></html>
